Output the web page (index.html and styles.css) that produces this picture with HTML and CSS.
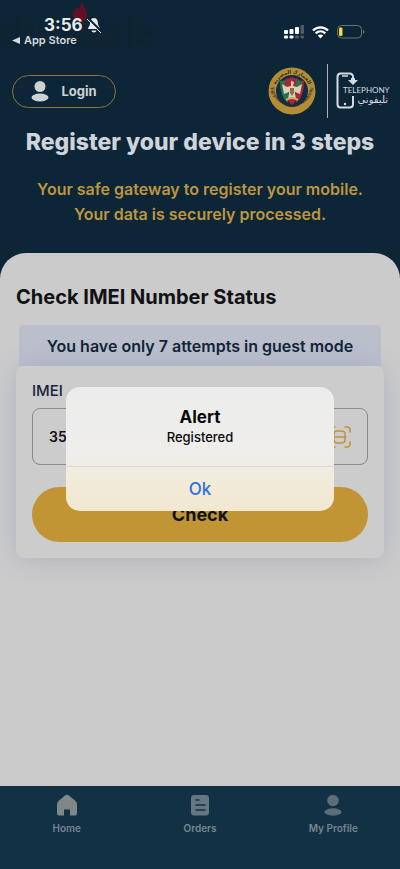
FILE: index.html
```html
<!DOCTYPE html>
<html lang="en">

<head>
    <meta charset="UTF-8">
    <meta name="viewport" content="width=device-width, initial-scale=1.0">
    <title>Telephony - Check IMEI</title>
    <link rel="stylesheet" href="styles.css">
</head>

<body>
    <header class="hero">
        <div class="watermark" aria-hidden="true">dubizzle
            <svg class="flame" viewBox="0 0 16 22"><path d="M9 0C10 5 15 9 15 15C15 19 12 22 8 22C4 22 1 19 1 15C1 11 4 10 5 6C6 8 7 8 7 10C9 7 9 4 9 0Z"/></svg>
        </div>

        <div class="status-bar">
            <div class="status-left">
                <div class="time">3:56
                    <svg width="16" height="17" viewBox="0 0 16 17">
                        <path d="M8 1C5 1 4 4 4 7C4 9 2 10 2 12H14C14 10 12 9 12 7C12 4 11 1 8 1ZM5.500 13.500H10.500C10 16 6 16 5.500 13.500Z" fill="#e8ecee"/>
                        <path d="M2 1L16 15" stroke="#0c2537" stroke-width="2"/>
                        <path d="M1 2L15 16" stroke="#e8ecee" stroke-width="1"/>
                    </svg>
                </div>
                <a class="back-link" href="#"><svg width="8" height="7" viewBox="0 0 8 7"><path d="M8 0V7L0 3.500Z" fill="#d5dade"/></svg>App Store</a>
            </div>
            <div class="status-right">
                <svg width="20" height="14" viewBox="0 0 20 14">
                    <g fill="#fff"><rect x="0" y="5" width="4" height="4" rx="1"/><rect x="5.500" y="4" width="4" height="5" rx="1"/><rect x="11" y="2" width="4" height="7" rx="1"/><rect x="0" y="10.500" width="4" height="3" rx="1"/><rect x="5.500" y="10.500" width="4" height="3" rx="1"/></g>
                    <g fill="#4b5d69"><rect x="16.500" y="0" width="3.500" height="9" rx="1"/><rect x="11" y="10.500" width="4" height="3" rx="1"/><rect x="16.500" y="10.500" width="3.500" height="3" rx="1"/></g>
                </svg>
                <svg width="17" height="13" viewBox="0 0 17 13" fill="none" stroke="#fff" stroke-width="2.300">
                    <path d="M1 4.500C5 .3 12 .3 16 4.500M3.700 7.300C6.500 4.700 10.500 4.700 13.300 7.300"/>
                    <path d="M5.800 9.600C7.400 8.200 9.600 8.200 11.200 9.600L8.500 12.500Z" fill="#fff" stroke="none"/>
                </svg>
                <svg width="28" height="14" viewBox="0 0 28 14">
                    <rect x=".5" y=".5" width="24" height="12.500" rx="4" fill="none" stroke="#65747d"/>
                    <rect x="2" y="2.500" width="3.500" height="8.500" rx="1.200" fill="#f4dc32"/>
                    <path d="M26 4.500C28 5.500 28 8 26 9Z" fill="#65747d"/>
                </svg>
            </div>
        </div>

        <div class="top-row">
            <button class="login-button" type="button">
                <svg width="18" height="21" viewBox="0 0 18 21" fill="#ced2d5"><circle cx="9" cy="5.500" r="5.500"/><ellipse cx="9" cy="16.500" rx="8.500" ry="4"/></svg>
                Login
            </button>
            <div class="logos">
                <svg width="48" height="48" viewBox="0 0 48 48" role="img" aria-label="Egyptian Customs Authority">
                    <defs>
                        <path id="sealTop" d="M6.500 24A17.500 17.500 0 0 1 41.500 24"/>
                        <path id="sealBottom" d="M3 21A21.200 21.200 0 0 0 45 21"/>
                    </defs>
                    <circle cx="24" cy="24" r="23.500" fill="#b38d36"/>
                    <circle cx="24" cy="24" r="16" fill="#122b49"/>
                    <path d="M12 14Q17 14 20 11V36Q12 30 12 14Z" fill="#247349"/>
                    <path d="M36 14Q31 14 28 11V36Q36 30 36 14Z" fill="#a42835"/>
                    <path d="M17 13L24 10L31 13V20H17Z" fill="#a42835"/>
                    <path d="M28 12Q31 14 34 14L33 21L28 20Z" fill="#247349"/>
                    <path d="M19 32H29L24 39Z" fill="#a42835"/>
                    <path d="M23 14L26 15L25 19L29 20L34 17L32 27L27 25L28 32L24 30L20 32L21 25L16 27L14 17L19 20L23 19Z" fill="#d8d0ba"/>
                    <path d="M22 21H26V26L24 29L22 26Z" fill="#947036"/>
                    <path d="M18 33Q24 29 30 33" fill="none" stroke="#d2b35f" stroke-width="2"/>
                    <text class="seal-arabic"><textPath href="#sealTop" startOffset="50%">الجمارك المصرية</textPath></text>
                    <text class="seal-text"><textPath href="#sealBottom" startOffset="50%">Egyptian Customs Authority</textPath></text>
                </svg>
                <span class="logo-divider"></span>
                <svg width="54" height="38" viewBox="0 0 54 38" role="img" aria-label="Telephony">
                    <path d="M17 11V5Q17 1.500 13.500 1.500H4.500Q1.500 1.500 1.500 5V32Q1.500 35.500 4.500 35.500H13.500Q17 35.500 17 32V24" fill="none" stroke="#d5dbe0" stroke-width="2"/>
                    <path d="M6 4H12" stroke="#d5dbe0" stroke-width="1.500"/>
                    <circle cx="9" cy="32" r="1.200" fill="#d5dbe0"/>
                    <path d="M12 8H15V6H19V8H22L17 13Z" fill="#d5dbe0"/>
                    <text class="logo-text" x="7" y="21">TELEPHONY</text>
                    <text class="logo-arabic" x="52" y="31">تليفوني</text>
                </svg>
            </div>
        </div>

        <h1>Register your device in 3 steps</h1>
        <p class="tagline">Your safe gateway to register your mobile.<br>Your data is securely processed.</p>
    </header>

    <main class="sheet">
        <h2>Check IMEI Number Status</h2>
        <p class="attempts">You have only 7 attempts in guest mode</p>
        <form class="imei-card">
            <label for="imei">IMEI</label>
            <div class="imei-field">
                <input id="imei" type="text" inputmode="numeric" value="35">
                <button class="scan-button" type="button" aria-label="Scan">
                    <svg width="22" height="22" viewBox="0 0 22 22" fill="none" stroke="#c19434" stroke-width="1.500" stroke-linecap="round">
                        <path d="M1 6V4Q1 1 4 1H6M16 1H18Q21 1 21 4V6M21 16V18Q21 21 18 21H16M6 21H4Q1 21 1 18V16M1 11H17M5 9V8Q5 5 8 5H12Q16 5 16 8V14Q16 17 12 17H8Q5 17 5 14V13"/>
                    </svg>
                </button>
            </div>
            <button class="check-button" type="button">Check</button>
        </form>
    </main>

    <nav class="tab-bar">
        <a href="#">
            <svg width="22" height="22" viewBox="0 0 22 22"><path d="M9 1.500Q11 0 13 1.500L19 6.500Q21 8 21 10V19Q21 21.500 19 21.500H14V15.500H8V21.500H3Q1 21.500 1 19V10Q1 8 3 6.500Z" fill="#7f8789"/></svg>
            Home
        </a>
        <a href="#">
            <svg width="22" height="22" viewBox="0 0 22 22"><rect x="2" y="1" width="18" height="20.500" rx="3" fill="#657780"/><path d="M7 6H10M7 11H16M7 16H16" stroke="#133145" stroke-width="1.500" stroke-linecap="round"/></svg>
            Orders
        </a>
        <a href="#">
            <svg width="22" height="22" viewBox="0 0 22 22" fill="#5c6f79"><circle cx="11" cy="6.500" r="5.700"/><ellipse cx="11" cy="18" rx="8.500" ry="3.700"/></svg>
            My Profile
        </a>
    </nav>

    <div class="overlay">
        <div class="alert" role="alertdialog" aria-labelledby="alertTitle" aria-describedby="alertMessage">
            <div class="alert-body">
                <h3 id="alertTitle">Alert</h3>
                <p id="alertMessage">Registered</p>
            </div>
            <button class="alert-ok" type="button">Ok</button>
        </div>
    </div>
</body>

</html>
```

FILE: styles.css
```css
* {
    box-sizing: border-box;
}

body {
    display: flex;
    flex-direction: column;
    min-height: 100vh;
    margin: 0;
    background-color: #0c2537;
    font-family: Inter, "Liberation Sans", "DejaVu Sans", sans-serif;
}

h1, h2, h3, p {
    margin: 0;
}

button {
    font-family: inherit;
    cursor: pointer;
}

svg {
    display: block;
    flex-shrink: 0;
}

a {
    text-decoration: none;
}

.hero {
    position: relative;
    padding-bottom: 26px;
}

/* Faint brand mark behind the status bar */
.watermark {
    position: absolute;
    top: 8px;
    left: 0;
    font-size: 38px;
    line-height: 48px;
    font-weight: 700;
    color: #0f2331;
}

.flame {
    position: absolute;
    top: -8px;
    left: 72px;
    width: 16px;
    height: 22px;
    fill: #650f25;
}

.status-bar {
    position: relative;
    display: flex;
    justify-content: space-between;
    align-items: flex-start;
    height: 64px;
    padding: 15px 35px 0 12px;
}

.time {
    display: flex;
    align-items: center;
    gap: 3px;
    padding-left: 32px;
    font-size: 17px;
    line-height: 20px;
    font-weight: 700;
    color: #e8ecee;
}

.back-link {
    display: flex;
    align-items: center;
    gap: 4px;
    font-size: 11px;
    line-height: 10px;
    font-weight: 600;
    color: #d5dade;
}

.status-right {
    display: flex;
    align-items: center;
    gap: 8px;
    padding-top: 10px;
}

.top-row {
    display: flex;
    justify-content: space-between;
    align-items: center;
    padding: 0 10px 0 12px;
}

.login-button {
    display: flex;
    align-items: center;
    justify-content: center;
    gap: 12px;
    width: 104px;
    height: 33px;
    padding: 0;
    border: 1px solid #8e7638;
    border-radius: 17px;
    background: none;
    color: #ced2d5;
    font-size: 13px;
    font-weight: 700;
}

.logos {
    display: flex;
    align-items: center;
    gap: 8px;
}

.logos svg:first-child {
    margin-right: 3px;
}

.logo-divider {
    width: 1px;
    height: 54px;
    background-color: #a9b2b8;
}

.seal-text {
    font-family: "Liberation Serif", serif;
    font-size: 5px;
    font-weight: 700;
    text-anchor: middle;
    fill: #302a20;
}

.seal-arabic {
    font-family: "DejaVu Sans", sans-serif;
    font-size: 5px;
    font-weight: 700;
    text-anchor: middle;
    fill: #302a20;
}

.logo-text {
    font-family: Lato, sans-serif;
    font-size: 8px;
    fill: #d5dbe0;
}

.logo-arabic {
    font-family: "DejaVu Sans", sans-serif;
    font-size: 10px;
    text-anchor: end;
    fill: #d5dbe0;
}

h1 {
    padding-top: 8px;
    text-align: center;
    font-size: 23px;
    line-height: 32px;
    font-weight: 800;
    color: #ced4da;
}

.tagline {
    padding-top: 19px;
    text-align: center;
    font-size: 16px;
    line-height: 25px;
    font-weight: 600;
    color: #bd963f;
}

.sheet {
    flex: 1;
    padding: 31px 16px;
    border-radius: 26px 26px 0 0;
    background-color: #cbcbcc;
}

h2 {
    font-size: 20px;
    line-height: 26px;
    font-weight: 700;
    color: #111214;
}

.attempts {
    margin: 15px 3px 0;
    padding: 10px 0 9px;
    border-radius: 4px 4px 0 0;
    background-color: #bbbfcc;
    text-align: center;
    font-size: 16px;
    line-height: 22px;
    font-weight: 600;
    color: #112438;
}

.imei-card {
    padding: 14px 16px 16px;
    border-radius: 8px;
    background-color: #cccccd;
    box-shadow: 0 2px 24px rgba(110, 118, 155, 0.3);
}

.imei-card label {
    display: block;
    font-size: 15px;
    line-height: 22px;
    font-weight: 500;
    color: #17243d;
}

.imei-field {
    display: flex;
    align-items: center;
    height: 57px;
    margin-top: 6px;
    padding: 0 16px;
    border: 1px solid #888a91;
    border-radius: 8px;
}

.imei-field input {
    flex: 1;
    min-width: 0;
    padding: 0;
    border: none;
    outline: none;
    background: none;
    color: #111214;
    font-family: inherit;
    font-size: 14px;
    font-weight: 600;
}

.scan-button {
    padding: 0;
    border: none;
    background: none;
}

.check-button {
    display: block;
    width: 100%;
    height: 55px;
    margin-top: 22px;
    border: none;
    border-radius: 28px;
    background-color: #c19434;
    color: #111214;
    font-size: 18px;
    font-weight: 700;
}

.tab-bar {
    display: grid;
    grid-template-columns: repeat(3, 1fr);
    height: 83px;
    padding-top: 8px;
    background-color: #133145;
}

.tab-bar a {
    display: flex;
    flex-direction: column;
    align-items: center;
    gap: 4px;
    font-size: 10px;
    line-height: 16px;
    font-weight: 600;
    color: #75868f;
}

/* Alert sits over the whole page */
.overlay {
    position: absolute;
    inset: 0;
    display: flex;
    align-items: flex-start;
    justify-content: center;
    padding-top: 387px;
}

.alert {
    width: 67%;
    max-width: 270px;
    border-radius: 14px;
    overflow: hidden;
    background: linear-gradient(#ececec 0%, #efeeeb 55%, #f1ead6 80%, #f1e8d2 100%);
    text-align: center;
}

.alert-body {
    padding: 19px 16px;
    color: #090909;
}

.alert h3 {
    font-size: 17px;
    line-height: 22px;
    font-weight: 700;
}

.alert p {
    font-size: 13px;
    line-height: 19px;
    font-weight: 500;
}

.alert-ok {
    display: block;
    width: 100%;
    height: 45px;
    padding: 0;
    border: none;
    border-top: 1px solid #dcd8cf;
    background: none;
    color: #2f70df;
    font-size: 17px;
    font-weight: 500;
}
```
